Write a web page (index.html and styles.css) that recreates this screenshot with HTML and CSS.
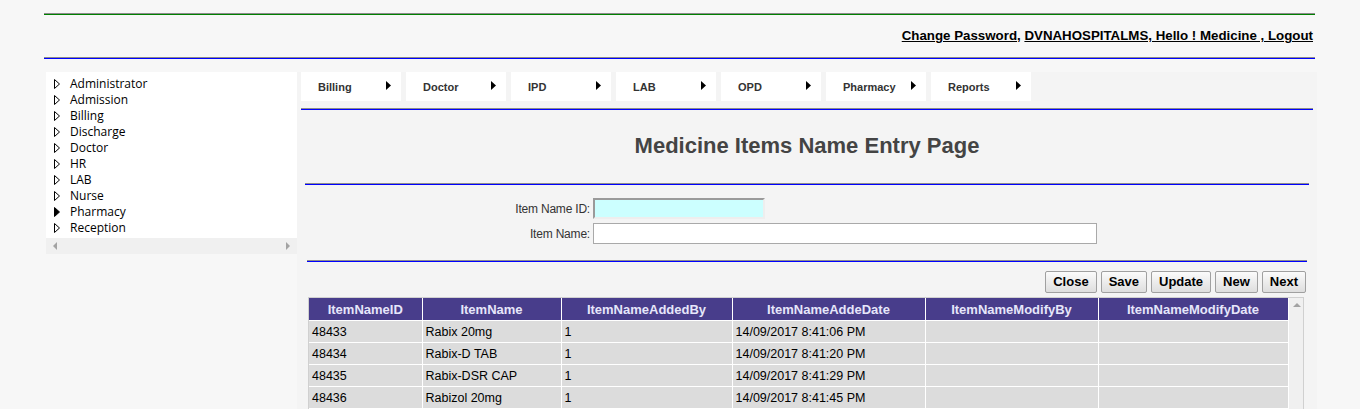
FILE: index.html
```html
<!DOCTYPE html>
<html>
<head>
<meta charset="utf-8">
<link rel="stylesheet" href="styles.css">
</head>
<body>
<div class="header">
  <div class="rule rule-green"></div>
  <div class="userbar">
    <a href="#">Change Password</a>, <a href="#">DVNAHOSPITALMS, Hello ! Medicine , Logout</a>
  </div>
  <div class="rule rule-blue"></div>
</div>
<div class="main">
  <div class="sidebar">
    <ul class="tree">
      <li><svg class="tri" viewBox="0 0 6 10"><polygon points="0.5,0.5 5.5,5 0.5,9.5" fill="none" stroke="#000"/></svg>Administrator</li>
      <li><svg class="tri" viewBox="0 0 6 10"><polygon points="0.5,0.5 5.5,5 0.5,9.5" fill="none" stroke="#000"/></svg>Admission</li>
      <li><svg class="tri" viewBox="0 0 6 10"><polygon points="0.5,0.5 5.5,5 0.5,9.5" fill="none" stroke="#000"/></svg>Billing</li>
      <li><svg class="tri" viewBox="0 0 6 10"><polygon points="0.5,0.5 5.5,5 0.5,9.5" fill="none" stroke="#000"/></svg>Discharge</li>
      <li><svg class="tri" viewBox="0 0 6 10"><polygon points="0.5,0.5 5.5,5 0.5,9.5" fill="none" stroke="#000"/></svg>Doctor</li>
      <li><svg class="tri" viewBox="0 0 6 10"><polygon points="0.5,0.5 5.5,5 0.5,9.5" fill="none" stroke="#000"/></svg>HR</li>
      <li><svg class="tri" viewBox="0 0 6 10"><polygon points="0.5,0.5 5.5,5 0.5,9.5" fill="none" stroke="#000"/></svg>LAB</li>
      <li><svg class="tri" viewBox="0 0 6 10"><polygon points="0.5,0.5 5.5,5 0.5,9.5" fill="none" stroke="#000"/></svg>Nurse</li>
      <li><svg class="tri" viewBox="0 0 6 10"><polygon points="0.5,0.5 5.5,5 0.5,9.5" fill="#000" stroke="#000"/></svg>Pharmacy</li>
      <li><svg class="tri" viewBox="0 0 6 10"><polygon points="0.5,0.5 5.5,5 0.5,9.5" fill="none" stroke="#000"/></svg>Reception</li>
    </ul>
    <div class="hscroll">
      <svg class="sarrow" viewBox="0 0 4 8"><polygon points="4,0 0,4 4,8" fill="#a3a3a3"/></svg>
      <svg class="sarrow" viewBox="0 0 4 8"><polygon points="0,0 4,4 0,8" fill="#a3a3a3"/></svg>
    </div>
  </div>
  <div class="content">
    <nav class="menu">
      <div class="menu-item"><span>Billing</span><svg class="arrow" viewBox="0 0 5 9"><polygon points="0,0 5,4.5 0,9" fill="#000"/></svg></div>
      <div class="menu-item"><span>Doctor</span><svg class="arrow" viewBox="0 0 5 9"><polygon points="0,0 5,4.5 0,9" fill="#000"/></svg></div>
      <div class="menu-item"><span>IPD</span><svg class="arrow" viewBox="0 0 5 9"><polygon points="0,0 5,4.5 0,9" fill="#000"/></svg></div>
      <div class="menu-item"><span>LAB</span><svg class="arrow" viewBox="0 0 5 9"><polygon points="0,0 5,4.5 0,9" fill="#000"/></svg></div>
      <div class="menu-item"><span>OPD</span><svg class="arrow" viewBox="0 0 5 9"><polygon points="0,0 5,4.5 0,9" fill="#000"/></svg></div>
      <div class="menu-item"><span>Pharmacy</span><svg class="arrow" viewBox="0 0 5 9"><polygon points="0,0 5,4.5 0,9" fill="#000"/></svg></div>
      <div class="menu-item"><span>Reports</span><svg class="arrow" viewBox="0 0 5 9"><polygon points="0,0 5,4.5 0,9" fill="#000"/></svg></div>
    </nav>
    <div class="rule rule-blue rule-menu"></div>
    <h1 class="title">Medicine Items Name Entry Page</h1>
    <div class="rule rule-blue rule-title"></div>
    <div class="form">
      <div class="form-row">
        <label class="label">Item Name ID:</label>
        <input class="input input-id" type="text">
      </div>
      <div class="form-row">
        <label class="label">Item Name:</label>
        <input class="input input-name" type="text">
      </div>
    </div>
    <div class="rule rule-blue rule-form"></div>
    <div class="buttons">
      <button class="btn">Close</button>
      <button class="btn">Save</button>
      <button class="btn">Update</button>
      <button class="btn">New</button>
      <button class="btn">Next</button>
    </div>
    <div class="grid-wrap">
      <table class="grid">
        <colgroup>
          <col class="c1"><col class="c2"><col class="c3"><col class="c4"><col class="c5"><col class="c6">
        </colgroup>
        <thead>
          <tr><th>ItemNameID</th><th>ItemName</th><th>ItemNameAddedBy</th><th>ItemNameAddeDate</th><th>ItemNameModifyBy</th><th>ItemNameModifyDate</th></tr>
        </thead>
        <tbody>
          <tr><td>48433</td><td>Rabix 20mg</td><td>1</td><td>14/09/2017 8:41:06 PM</td><td></td><td></td></tr>
          <tr><td>48434</td><td>Rabix-D TAB</td><td>1</td><td>14/09/2017 8:41:20 PM</td><td></td><td></td></tr>
          <tr><td>48435</td><td>Rabix-DSR CAP</td><td>1</td><td>14/09/2017 8:41:29 PM</td><td></td><td></td></tr>
          <tr><td>48436</td><td>Rabizol 20mg</td><td>1</td><td>14/09/2017 8:41:45 PM</td><td></td><td></td></tr>
        </tbody>
      </table>
      <div class="vscroll">
        <svg class="uparrow" viewBox="0 0 8 4"><polygon points="0,4 4,0 8,4" fill="#a3a3a3"/></svg>
      </div>
    </div>
  </div>
</div>
</body>
</html>
```
FILE: styles.css
```css
html, body {
  margin: 0;
  padding: 0;
  background: #f7f7f7;
  font-family: "Liberation Sans", Arial, sans-serif;
  height: 409px;
  overflow: hidden;
}

.header {
  margin-left: 44px;
  width: 1271px;
  padding-top: 13px;
}

.rule {
  height: 1px;
  border-top: 1px solid #8c8c8c;
}

.rule-green { background: #008000; }
.rule-blue { background: #0000ff; }

.userbar {
  height: 42px;
  box-sizing: border-box;
  padding-top: 13px;
  padding-right: 2px;
  text-align: right;
  font-size: 13.3px;
  line-height: 16px;
  font-weight: bold;
  color: #000;
}

.userbar a {
  color: #000;
  text-decoration: underline;
}

.main {
  display: flex;
  align-items: flex-start;
  margin-top: 13px;
  padding-left: 46px;
}

.sidebar {
  width: 251px;
  flex: none;
}

.tree {
  list-style: none;
  margin: 0;
  padding: 4px 0 3px 8px;
  background: #fff;
  height: 166px;
  box-sizing: border-box;
  font-family: "Open Sans", sans-serif;
  font-size: 12px;
  color: #000;
}

.tree li {
  display: flex;
  align-items: center;
  height: 16px;
  line-height: 16px;
}

.tri {
  width: 6px;
  height: 10px;
  margin-right: 10px;
  flex: none;
}

.hscroll {
  height: 16px;
  background: #f0f0f0;
  display: flex;
  align-items: center;
  justify-content: space-between;
  padding: 0 7px 0 7px;
}

.sarrow {
  width: 4px;
  height: 8px;
}

.content {
  width: 1020px;
  flex: none;
  background: #f4f4f4;
  padding: 0 4px;
  box-sizing: border-box;
  height: 337px;
}

.menu {
  display: flex;
  gap: 5px;
}

.menu-item {
  width: 100px;
  height: 29px;
  background: #fff;
  display: flex;
  align-items: center;
  justify-content: space-between;
  box-sizing: border-box;
  padding: 0 10px 0 17px;
  font-size: 11px;
  font-weight: bold;
  color: #333;
}

.arrow {
  width: 5px;
  height: 9px;
  margin-top: -2px;
}

.rule-menu {
  margin-top: 7px;
}

.title {
  margin: 0;
  padding-top: 23px;
  line-height: 26px;
  font-size: 22px;
  font-weight: bold;
  color: #444;
  text-align: center;
}

.rule-title {
  margin: 24px 4px 0 4px;
}

.form {
  padding-top: 13px;
  display: flex;
  flex-direction: column;
  gap: 4px;
}

.form-row {
  display: flex;
  align-items: center;
  height: 21px;
}

.label {
  width: 289px;
  padding-right: 3px;
  text-align: right;
  font-size: 12px;
  color: #333;
  letter-spacing: -0.2px;
}

.input {
  margin: 0;
  height: 21px;
  box-sizing: border-box;
  font-family: "Liberation Sans", Arial, sans-serif;
  font-size: 12px;
  padding: 1px 3px;
}

.input-id {
  width: 172px;
  background: #ccffff;
  border: 2px solid;
  border-color: #9a9a9a #eeeeee #eeeeee #9a9a9a;
}

.input-name {
  width: 504px;
  background: #fff;
  border: 1px solid #a9a9a9;
}

.rule-form {
  margin: 16px 6px 0 6px;
}

.buttons {
  display: flex;
  justify-content: flex-end;
  gap: 4px;
  margin: 9px 7px 0 0;
}

.btn {
  height: 22px;
  margin: 0;
  padding: 0 7px;
  box-sizing: border-box;
  border: 1px solid #a0a0a0;
  border-radius: 2px;
  background: linear-gradient(#fbfbfb, #dedede);
  font-family: "Liberation Sans", Arial, sans-serif;
  font-size: 13px;
  font-weight: bold;
  color: #000;
  line-height: 20px;
}

.grid-wrap {
  display: flex;
  align-items: flex-start;
  margin: 4px 9px 0 7px;
  border: 1px solid #d0d0d0;
  border-bottom: none;
  height: 111px;
  overflow: hidden;
}

.grid {
  border-collapse: collapse;
  table-layout: fixed;
  width: 979px;
  flex: none;
  font-size: 12.5px;
}

.c1 { width: 113px; }
.c2 { width: 139px; }
.c3 { width: 171px; }
.c4 { width: 193px; }
.c5 { width: 173px; }
.c6 { width: 190px; }

.grid th {
  background: #483d8b;
  color: #e6e6fa;
  font-size: 13px;
  font-weight: bold;
  height: 22px;
  padding: 0;
  border: 1px solid #fff;
  border-top: none;
  text-align: center;
}

.grid th:first-child,
.grid td:first-child { border-left: none; }

.grid td {
  background: #dcdcdc;
  color: #000;
  height: 21px;
  padding: 0 3px;
  border: 1px solid #fff;
  white-space: nowrap;
}

.vscroll {
  flex: none;
  width: 16px;
  height: 111px;
  background: #f0f0f0;
  display: flex;
  justify-content: center;
  padding-top: 5px;
  box-sizing: border-box;
}

.uparrow {
  width: 8px;
  height: 4px;
}
```
